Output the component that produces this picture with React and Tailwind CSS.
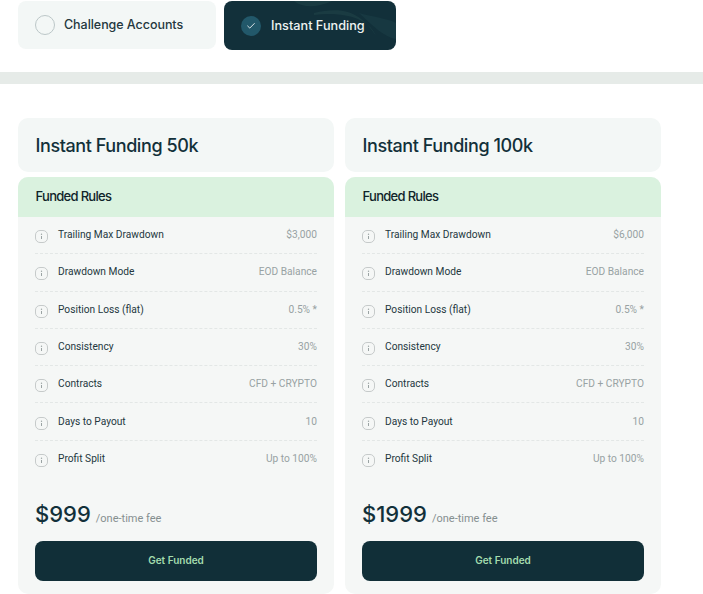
import { Check } from 'lucide-react';

const plans = [
  { name: 'Instant Funding 50k', drawdown: '$3,000', price: '$999' },
  { name: 'Instant Funding 100k', drawdown: '$6,000', price: '$1999' },
];

function InfoIcon() {
  return (
    <svg width="13" height="13" viewBox="0 0 13 13" fill="none" className="shrink-0 mt-[2px]">
      <rect x="0.5" y="0.5" width="12" height="12" rx="4.5" stroke="#c6caca" />
      <circle cx="6.5" cy="4.3" r="0.7" fill="#9aa3a3" />
      <path d="M6.5 6v3" stroke="#9aa3a3" strokeWidth="1" />
    </svg>
  );
}

function Row({ label, value, last }) {
  return (
    <div className={`flex justify-between h-[37.3px] pt-[11.2px] font-['Roboto',sans-serif] ${last ? '' : 'border-b border-dashed border-[#e3e7e6]'}`}>
      <div className="flex gap-[10px]">
        <InfoIcon />
        <span className="text-[10.2px] leading-[14px] text-[#24383e]">{label}</span>
      </div>
      <span className="text-[10.2px] leading-[14px] text-[#98a2a3]">{value}</span>
    </div>
  );
}

function PlanCard({ plan }) {
  const rows = [
    ['Trailing Max Drawdown', plan.drawdown],
    ['Drawdown Mode', 'EOD Balance'],
    ['Position Loss (flat)', '0.5% *'],
    ['Consistency', '30%'],
    ['Contracts', 'CFD + CRYPTO'],
    ['Days to Payout', '10'],
    ['Profit Split', 'Up to 100%'],
  ];
  return (
    <div className="w-[316px] shrink-0">
      <div className="h-[54px] bg-[#f3f7f6] rounded-[10px] flex items-center px-[17.5px] mb-[5px]">
        <h2 className="text-[18px] font-medium tracking-[-0.42px] text-[#12303a]">{plan.name}</h2>
      </div>
      <div className="bg-[#f5f7f6] rounded-[10px] overflow-hidden h-[417px]">
        <div className="h-[40px] bg-[#daf2df] flex items-center px-[17.5px]">
          <h3 className="text-[13px] font-medium tracking-[-0.7px] text-[#10242a]">Funded Rules</h3>
        </div>
        <div className="px-[17px]">
          {rows.map((r, i) => (
            <Row key={r[0]} label={r[0]} value={r[1]} last={i === rows.length - 1} />
          ))}
          <div className="flex items-baseline gap-[5px] mt-[20px] h-[36px]">
            <span className="text-[22px] font-medium text-[#12303a]">{plan.price}</span>
            <span className="text-[11px] text-[#858f90] font-['Roboto',sans-serif]">/one-time fee</span>
          </div>
          <button className="w-full h-[40px] mt-[7px] pb-[1px] bg-[#112f38] rounded-[8px] text-[10px] font-semibold text-[#a3dcae]">
            Get Funded
          </button>
        </div>
      </div>
    </div>
  );
}

export default function App() {
  return (
    <div className="w-[703px] h-[594px] overflow-hidden bg-white font-['Inter',sans-serif]">
      <div className="flex gap-2 px-[18px] pt-[1px] h-[72px]">
        <div className="w-[198px] h-[48px] bg-[#f3f7f6] rounded-[8px] flex items-center gap-[10px] px-[17px]">
          <span className="w-5 h-5 rounded-full border border-[#bcc7c8]" />
          <span className="text-[12.5px] font-medium tracking-[-0.05px] text-[#24383e] -ml-[1px]">Challenge Accounts</span>
        </div>
        <div className="relative overflow-hidden w-[172px] h-[49px] rounded-[8px] flex items-center gap-[10px] px-[17px] bg-[#12303a]">
          <svg className="absolute inset-0" width="172" height="49" viewBox="0 0 172 49" fill="none">
            <path d="M70 0C80 8 95 6 108 0Z" fill="#1a3b42" />
            <path d="M90 12C115 6 135 8 152 35C146 20 125 10 90 14Z" fill="#1f4248" opacity="0.6" />
            <path d="M135 12C150 16 165 18 172 22V38C160 36 150 26 135 12Z" fill="#173841" />
          </svg>
          <span className="relative w-5 h-5 rounded-full bg-[#22586a] flex items-center justify-center">
            <Check className="w-[10px] h-[10px] text-white" strokeWidth={2} />
          </span>
          <span className="relative text-[12.7px] font-medium text-[#eef3f2] pt-[1px]">Instant Funding</span>
        </div>
      </div>
      <div className="h-3 bg-[#e6ebe8]" />
      <div className="flex gap-[11px] px-[18px] pt-[34px]">
        {plans.map((p) => (
          <PlanCard key={p.name} plan={p} />
        ))}
      </div>
    </div>
  );
}
